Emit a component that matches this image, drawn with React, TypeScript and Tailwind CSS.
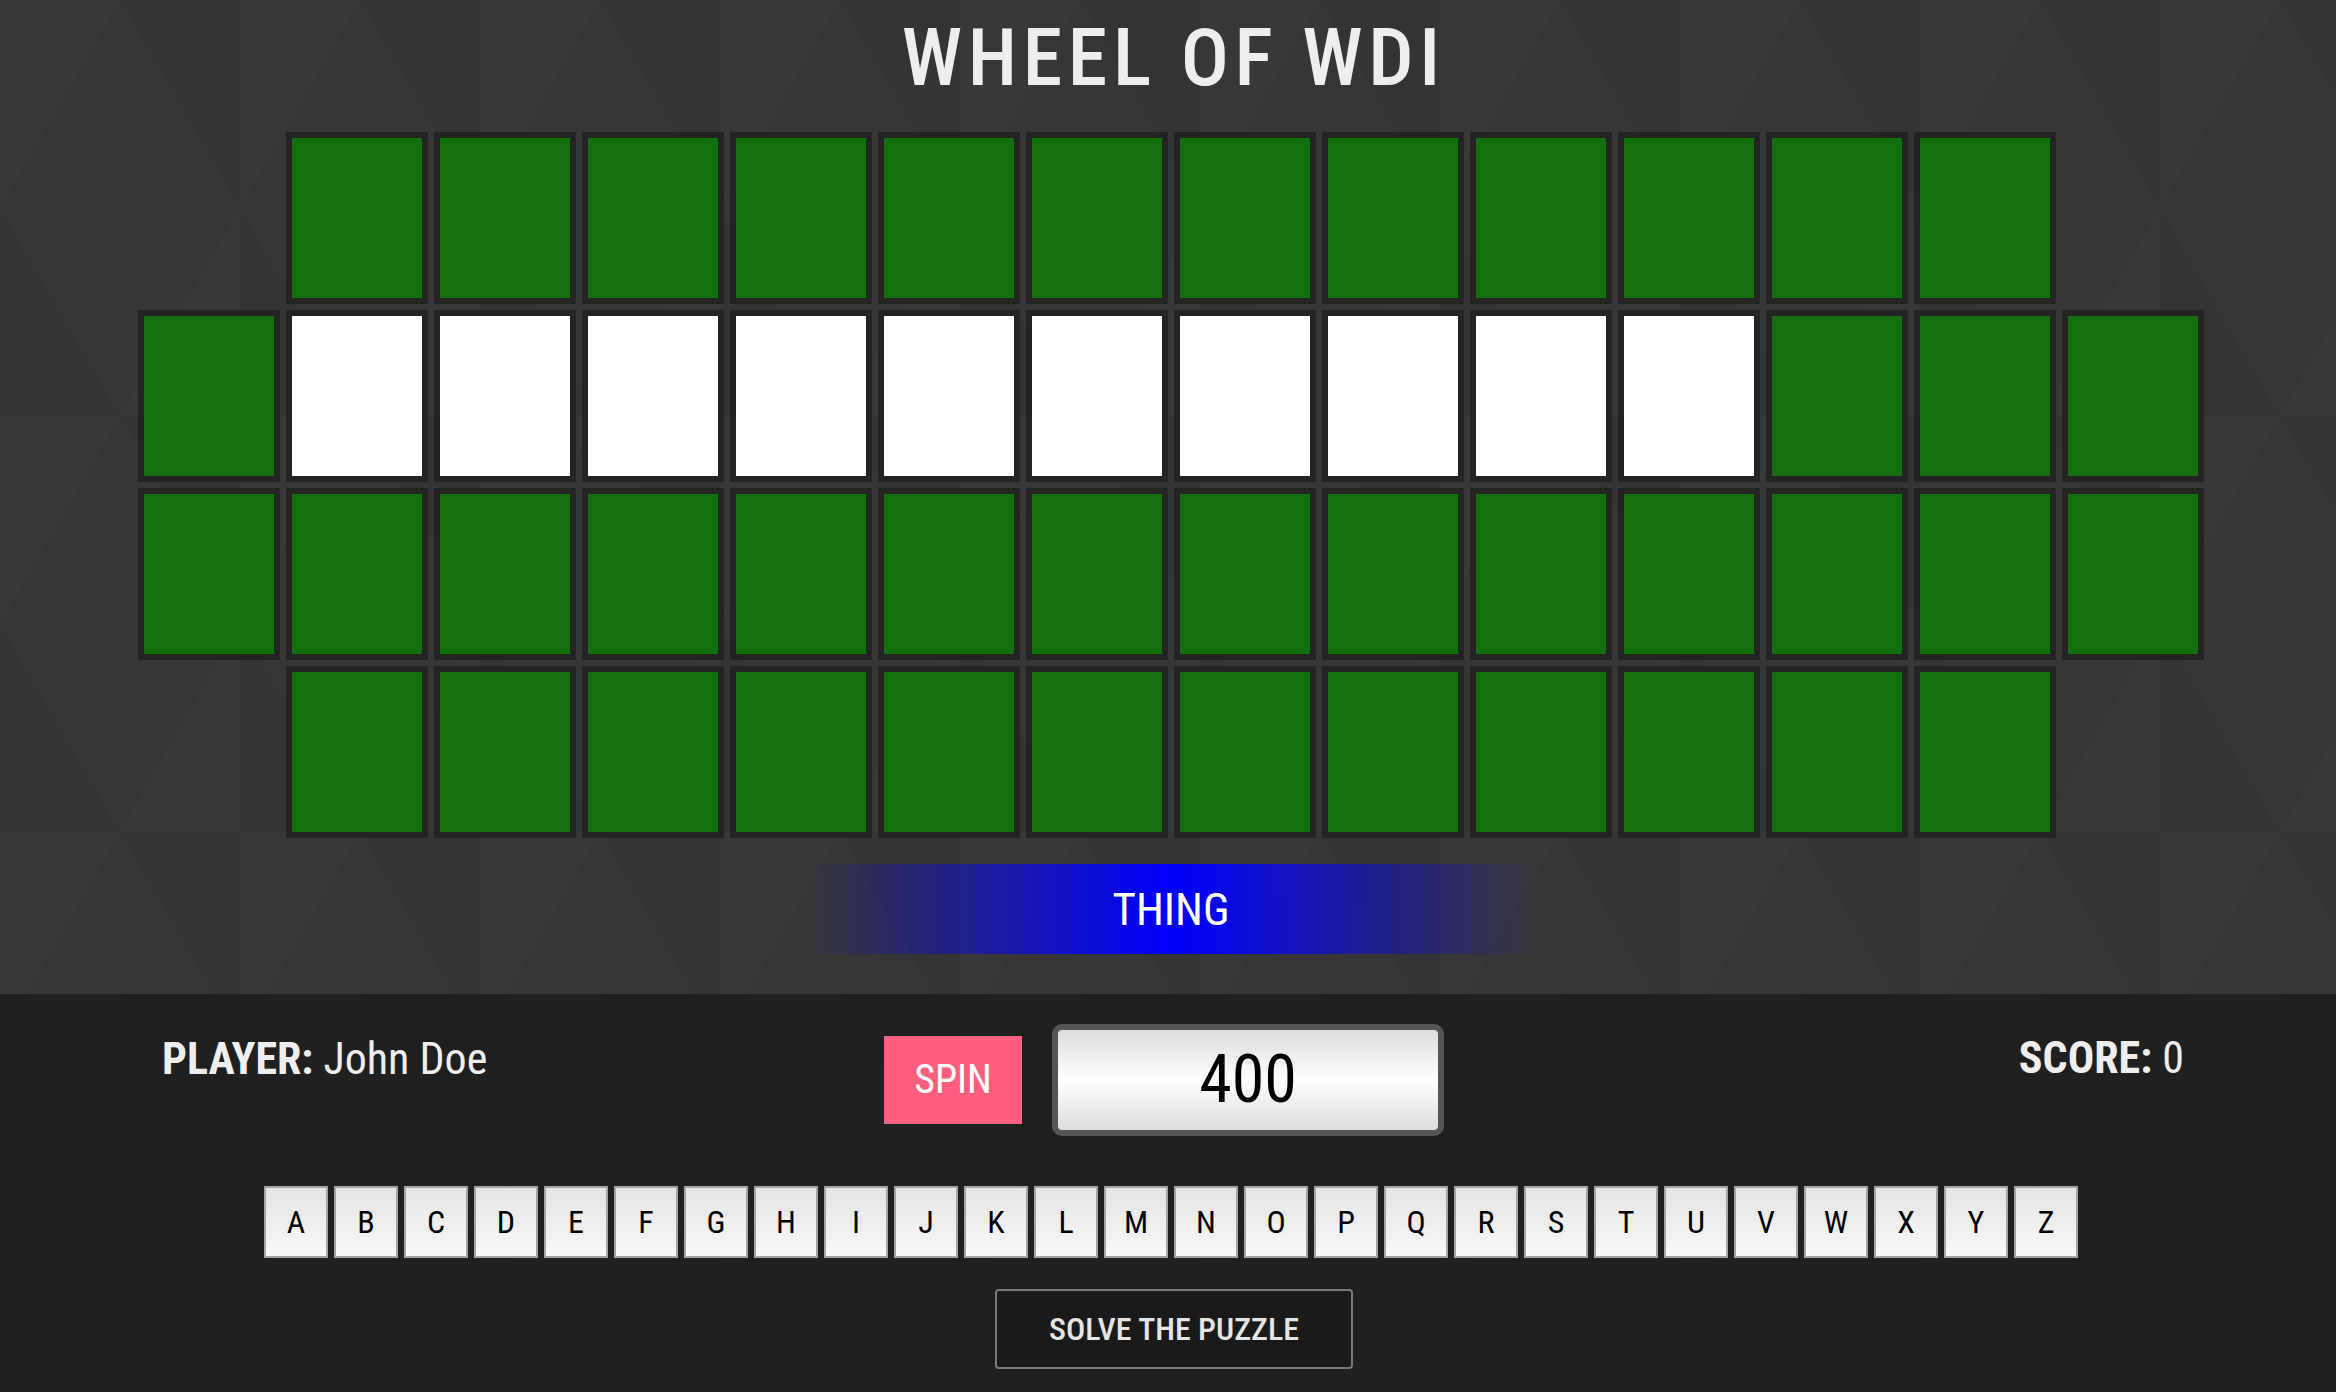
import React from "react";

const GREEN = "bg-[#14700c]";

function Tile({ white }: { white?: boolean }) {
    return (
        <div className={`w-[142px] h-[172px] border-[6px] border-[#232323] ${white ? "bg-white" : GREEN}`} />
    );
}

function Row({ count, whites = [] }: { count: number; whites?: number[] }) {
    return (
        <div className="flex justify-center gap-[6px]">
            {Array.from({ length: count }).map((_, i) => (
                <Tile key={i} white={whites.includes(i)} />
            ))}
        </div>
    );
}

const LETTERS = "ABCDEFGHIJKLMNOPQRSTUVWXYZ".split("");

export default function App() {
    return (
        <div className="w-[2336px] h-[1392px] overflow-hidden flex flex-col font-['Roboto',sans-serif] font-stretch-condensed bg-[#363636]">
            {/* game board */}
            <div className="h-[994px] flex flex-col items-center pl-[6px] pt-[18px] bg-[linear-gradient(60deg,rgba(0,0,0,0.03)_25%,transparent_25%,transparent_75%,rgba(0,0,0,0.03)_75%),linear-gradient(-60deg,rgba(255,255,255,0.01)_25%,transparent_25%,transparent_75%,rgba(255,255,255,0.01)_75%)] bg-[length:240px_416px]">
                <h1 className="text-[80px] leading-none font-medium tracking-[0.07em] text-[#eeeeee] pl-[0.07em]">WHEEL OF WDI</h1>
                <div className="mt-[34px] flex flex-col gap-[6px]">
                    <Row count={12} />
                    <Row count={14} whites={[1, 2, 3, 4, 5, 6, 7, 8, 9, 10]} />
                    <Row count={14} />
                    <Row count={12} />
                </div>
                <div className="mt-[26px] w-[730px] h-[90px] flex items-center justify-center bg-[linear-gradient(to_right,rgba(0,0,255,0),#0000ff_50%,rgba(0,0,255,0))]">
                    <span className="text-[45px] leading-none text-white">THING</span>
                </div>
            </div>

            {/* controls */}
            <div className="flex-1 bg-[#202020] flex flex-col items-center bg-[linear-gradient(60deg,rgba(0,0,0,0.03)_25%,transparent_25%,transparent_75%,rgba(0,0,0,0.03)_75%)] bg-[length:240px_416px]">
                <div className="w-full grid grid-cols-[1fr_auto_1fr] items-start pt-[30px]">
                    <div className="pl-[162px] pt-[13px] text-[44px] leading-none text-[#eeeeee]">
                        <span className="font-bold">PLAYER:</span> John Doe
                    </div>
                    <div className="flex items-center gap-[30px] pr-[8px]">
                        <button className="w-[138px] h-[88px] bg-[#ff5e7e] text-white text-[40px] leading-none">SPIN</button>
                        <div className="w-[392px] h-[112px] rounded-[10px] border-[6px] border-[#555555] flex items-center justify-center bg-[linear-gradient(to_bottom,#dcdcdc,#ffffff_50%,#dcdcdc)]">
                            <span className="text-[66px] leading-none text-black">400</span>
                        </div>
                    </div>
                    <div className="pr-[152px] pt-[12px] text-right text-[44px] leading-none text-[#eeeeee]">
                        <span className="font-bold">SCORE:</span> 0
                    </div>
                </div>
                <div className="mt-[50px] pl-[6px] flex gap-[6px]">
                    {LETTERS.map((l) => (
                        <button key={l} className="w-[64px] h-[72px] border-2 border-[#a5a5a5] bg-[linear-gradient(to_bottom,#e4e4e4,#f8f8f8)] flex items-center justify-center text-[32px] leading-none text-black">
                            {l}
                        </button>
                    ))}
                </div>
                <button className="mt-[31px] ml-[12px] w-[358px] h-[80px] rounded-[4px] border-2 border-[#7a7a7a] bg-[#1a1a1a] text-[32px] leading-none font-medium text-[#e5e5e5]">
                    SOLVE THE PUZZLE
                </button>
            </div>
        </div>
    );
}
